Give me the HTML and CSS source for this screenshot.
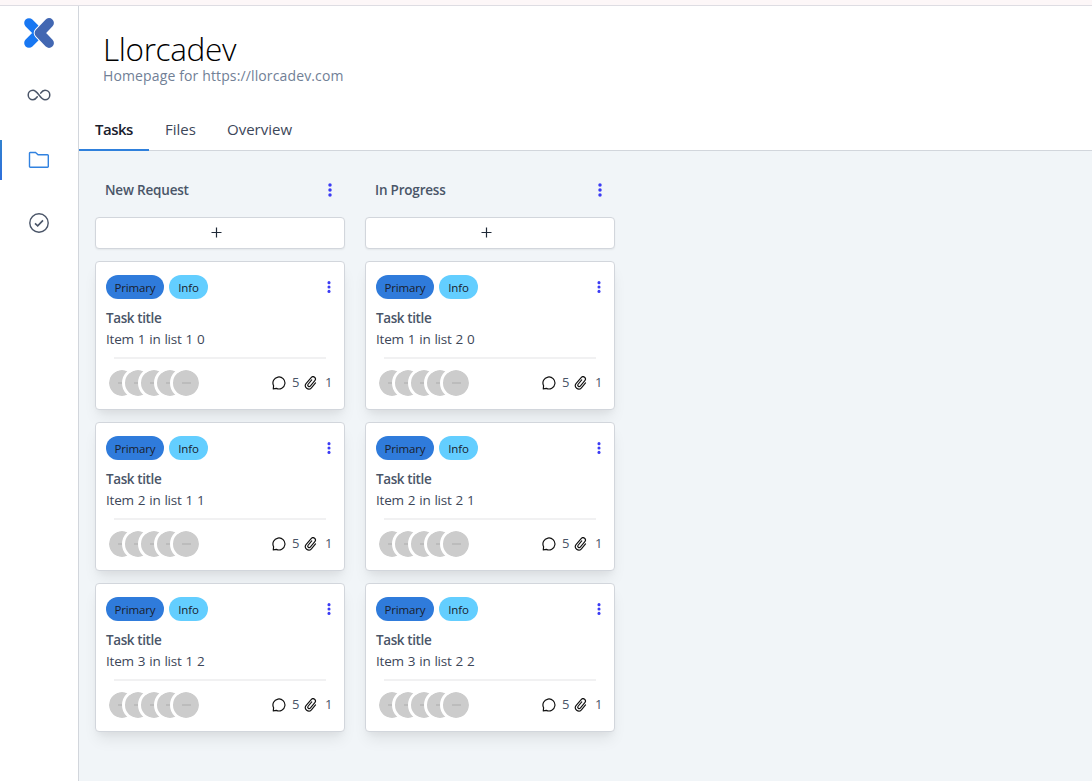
FILE: index.html
```html
<!DOCTYPE html>
<html lang="en">
<head>
<meta charset="utf-8">
<title>Llorcadev</title>
<link rel="stylesheet" href="styles.css">
</head>
<body>
<svg width="0" height="0" class="defs">
  <symbol id="dots" viewBox="0 0 6 16"><circle cx="3" cy="3" r="1.750"/><circle cx="3" cy="8" r="1.750"/><circle cx="3" cy="13" r="1.750"/></symbol>
  <symbol id="comment" viewBox="0 0 14 14"><path d="M1.300 12.800 1.600 9.700A6 6 0 1 1 4.400 12.400Z" fill="none" stroke="#111" stroke-width="1.200" stroke-linejoin="round"/></symbol>
  <symbol id="clip" viewBox="0 0 14 14"><g transform="rotate(40 7 7)" fill="none" stroke="#111" stroke-width="1.150" stroke-linecap="round"><path d="M5.600 4.200v5.600a1.400 1.400 0 0 0 2.800 0V2.700a2.400 2.400 0 0 0-4.800 0v7.700a3.400 3.400 0 0 0 6.800 0V4"/></g></symbol>
</svg>
<div class="topline"></div>
<div class="app">
  <nav class="sidebar">
    <svg class="logo" viewBox="0 0 32 32" width="32" height="32"><path d="M6 6 16 16 6 26" fill="none" stroke="#1877f2" stroke-width="9.600" stroke-linecap="round" stroke-linejoin="round"/><path d="M26 6 16.500 16 26 26" fill="none" stroke="#fff" stroke-width="11.600" stroke-linecap="round" stroke-linejoin="round"/><path d="M26 6 16.500 16 26 26" fill="none" stroke="#4267b2" stroke-width="9.800" stroke-linecap="round" stroke-linejoin="round"/></svg>
    <a class="nav"><svg width="24" height="14" viewBox="0 0 24 14"><path d="M10.300 8.800C8.900 10.800 7.700 11.800 6 11.800a4.800 4.800 0 0 1 0-9.600c4.800 0 7.200 9.600 12 9.600a4.800 4.800 0 0 0 0-9.600c-1.900 0-3.100 1.200-4.300 3" fill="none" stroke="#4a5568" stroke-width="1.500" stroke-linecap="round"/></svg></a>
    <a class="nav active"><svg width="22" height="18" viewBox="0 0 22 18"><path d="M2 1.500h5.500l2.600 2.300H19.500a.8.8 0 0 1 .8.8V15.500a.8.8 0 0 1-.8.8H2.300a.8.8 0 0 1-.8-.8V2a.5.5 0 0 1 .5-.5Z" fill="none" stroke="#3182e0" stroke-width="1.400"/></svg></a>
    <a class="nav"><svg width="22" height="22" viewBox="0 0 22 22"><g fill="none" stroke="#4a5568" stroke-width="1.400"><circle cx="11" cy="11" r="9.200"/><path d="m7 11.400 2.700 2.500L15 8.400" stroke-width="1.600"/></g></svg></a>
  </nav>
  <main class="main">
    <header class="head"><h1>Llorcadev</h1><p>Homepage for https://llorcadev.com</p></header>
    <div class="tabs"><a class="tab on">Tasks</a><a class="tab files">Files</a><a class="tab over">Overview</a></div>
    <div class="board" id="board"></div>
  </main>
</div>
<script src="board.js"></script>
</body>
</html>
```
FILE: board.js
```js
const dots = '<svg class="dots" width="6" height="16"><use href="#dots"/></svg>';
const card = (list, n) => `
  <article class="card">
    <div class="row"><span class="tag primary"><b>Primary</b></span><span class="tag info"><b>Info</b></span>${dots}</div>
    <h3>Task title</h3>
    <p class="desc">Item ${n + 1} in list ${list} ${n}</p>
    <hr>
    <div class="foot">
      <div class="avatars">${'<i><s></s></i>'.repeat(5)}</div>
      <svg class="comment" width="14" height="14"><use href="#comment"/></svg><span class="num five">5</span>
      <svg class="clip" width="14" height="14"><use href="#clip"/></svg><span class="num one">1</span>
    </div>
  </article>`;
document.getElementById('board').innerHTML = ['New Request', 'In Progress'].map((name, i) => `
  <section class="col">
    <div class="colhead"><h2>${name}</h2>${dots}</div>
    <button class="add"><svg width="11" height="11" viewBox="0 0 11 11"><path d="M5.500 .5v10M.5 5.500h10" stroke="#1f2937" stroke-width="1.200"/></svg></button>
    ${[0, 1, 2].map(n => card(i + 1, n)).join('')}
  </section>`).join('');
```
FILE: styles.css
```css
* { box-sizing: border-box; }
body { margin: 0; height: 781px; overflow: hidden; background: #fff; font-family: "Open Sans", "Noto Sans", sans-serif; color: #4a5568; display: flex; flex-direction: column; }
h1, h2, h3, p { margin: 0; }
.defs { position: absolute; }
.topline { height: 6px; flex: none; background: #fdf7f8; border-bottom: 1px solid #dedde3; }
.app { flex: 1; display: flex; min-height: 0; }
.sidebar { width: 79px; flex: none; border-right: 1px solid #d2d6dc; display: flex; flex-direction: column; align-items: center; padding-top: 11px; }
.logo { flex: none; margin-bottom: 26px; }
.nav { width: 100%; height: 40px; margin-bottom: 24px; flex: none; display: flex; align-items: center; justify-content: center; }
.nav.active { height: 41px; margin-bottom: 23px; background: linear-gradient(#3182ce, #2f6fdc) left bottom / 2px 40px no-repeat; }
.main { flex: 1; display: flex; flex-direction: column; }
.head { height: 103px; padding: 24px 0 0 24px; }
h1 { font-weight: 350; font-size: 31.500px; line-height: 38px; letter-spacing: -.35px; color: #000; }
.head p { font-size: 14px; line-height: 16px; color: #718096; letter-spacing: .13px; }
.tabs { height: 42px; display: flex; border-bottom: 1px solid #d2d6dc; }
.tab { font-size: 15px; line-height: 40px; height: 42px; padding: 0 16px; letter-spacing: 0; white-space: nowrap; color: #3d4759; }
.tab.on { width: 70px; color: #1a202c; font-weight: 600; border-bottom: 2px solid #2f80dc; letter-spacing: -.5px; }
.tab.files { width: 62px; }
.board { flex: 1; background: #f1f5f8; padding: 24px 16px; display: flex; gap: 20px; }
.col { width: 250px; }
.colhead { height: 30px; padding: 0 12px 0 10px; display: flex; align-items: center; justify-content: space-between; }
h2 { font-size: 13.500px; font-weight: 600; letter-spacing: -.2px; }
.dots { fill: #3b3bf5; display: block; }
.add { width: 100%; height: 32px; margin: 12px 0 12px; display: flex; align-items: center; justify-content: center; padding: 0 7px 2px 0; background: #fff; border: 1px solid #d2d6dc; border-radius: 4px; box-shadow: 0 1px 2px rgba(0,0,0,.06); }
.card { height: 149px; margin-bottom: 12px; padding: 13px 10px 0; background: #fff; border: 1px solid #d2d6dc; border-radius: 4px; box-shadow: 0 10px 15px -3px rgba(0,0,0,.08), 0 4px 6px -2px rgba(0,0,0,.04); }
.row { height: 24px; display: flex; gap: 5px; }
.row .dots { margin: 5px 2px 0 auto; width: 6px; height: 14px; }
.tag { height: 24px; border-radius: 12px; color: #1a202c; display: flex; align-items: center; justify-content: center; }
.tag b { font-size: 11.500px; font-weight: 400; letter-spacing: -.15px; padding-top: 1px; }
.primary { width: 58px; background: #2f7bdb; }
.info { width: 39px; background: #63ceff; }
h3 { margin-top: 9px; font-size: 13.500px; line-height: 21px; font-weight: 600; letter-spacing: -.4px; }
.desc { font-size: 13.500px; line-height: 21px; letter-spacing: -.2px; word-spacing: .6px; color: #3d4759; }
hr { border: 0; height: 2px; margin: 7px 8px 0; background: #f1f1f2; }
.foot { display: flex; align-items: center; height: 48px; }
.avatars { display: flex; margin-right: 70px; }
.avatars i { width: 32px; height: 32px; margin-right: -16px; border: 3px solid #fff; border-radius: 50%; background: #ccc padding-box; display: flex; align-items: center; justify-content: center; flex: none; }
.avatars i:last-child { margin-right: 0; }
.avatars s { width: 9px; height: 2px; background: #bcbcbc; }
.num { font-size: 13px; line-height: 18px; margin-top: -2px; }
.five { width: 13px; padding-left: 6px; margin-right: 5px; }
.one { padding-left: 7px; }
.comment, .clip { flex: none; }
```
